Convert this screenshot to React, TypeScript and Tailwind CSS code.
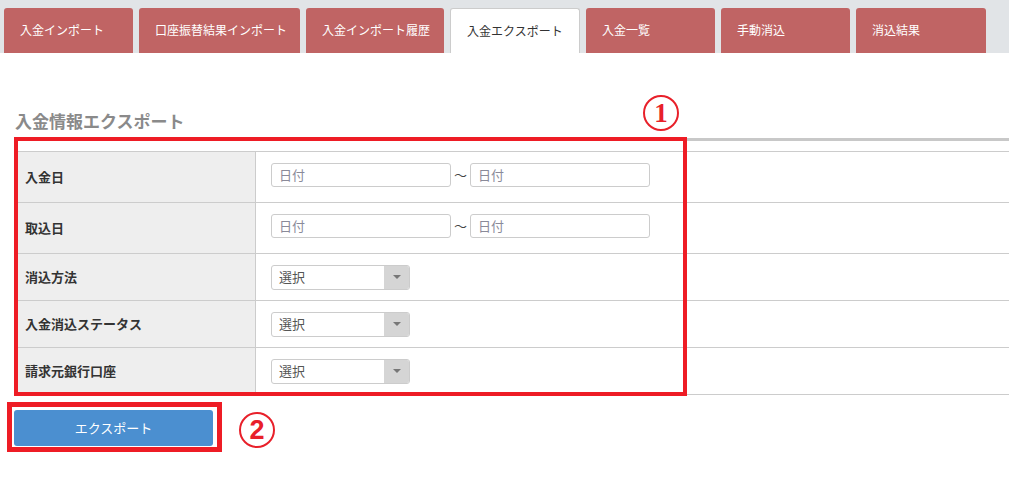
const font = { fontFamily: '"Noto Sans CJK JP", "Noto Sans", sans-serif' };

const tabs = [
  { label: "入金インポート", w: "w-[129px]" },
  { label: "口座振替結果インポート", w: "w-[161px]" },
  { label: "入金インポート履歴", w: "w-[138px]" },
  { label: "入金エクスポート", w: "w-[130px]", active: true },
  { label: "入金一覧", w: "w-[129px]" },
  { label: "手動消込", w: "w-[129px]" },
  { label: "消込結果", w: "w-[130px]" },
];

function DateInput() {
  return (
    <div className="w-[180px] h-[24px] border border-[#cccccc] rounded-[3px] bg-white flex items-center pl-[7px] text-[13px] text-[#8a8a99]">
      日付
    </div>
  );
}

function SelectBox() {
  return (
    <div className="w-[139px] h-[25px] border border-[#cccccc] rounded-[3px] bg-white flex overflow-hidden">
      <div className="flex-1 flex items-center pl-[7px] text-[13px] text-[#555555]">選択</div>
      <div className="w-[25px] bg-[#d5d5d5] flex items-center justify-center">
        <div className="w-0 h-0 border-l-[4px] border-r-[4px] border-t-[4px] border-l-transparent border-r-transparent border-t-[#777777]" />
      </div>
    </div>
  );
}

function Row({ label, h, children }: { label: string; h: string; children: React.ReactNode }) {
  return (
    <div className={`flex border-b border-[#cccccc] ${h}`}>
      <div className="w-[241px] shrink-0 bg-[#eeeeee] border-r border-[#cccccc] flex items-center pl-[10px] text-[13px] font-bold text-[#333333]">
        {label}
      </div>
      <div className="flex-1 flex items-center pl-[15px]">{children}</div>
    </div>
  );
}

function DateRange() {
  return (
    <div className="flex items-center pb-[4px]">
      <DateInput />
      <span className="w-[19px] text-center text-[13px] text-[#444444]">〜</span>
      <DateInput />
    </div>
  );
}

export default function App() {
  return (
    <div className="relative w-[1009px] h-[487px] bg-white overflow-hidden" style={font}>
      <div className="h-[53px] bg-[#e1e4e7] flex items-end pl-[4px] gap-[6px]">
        {tabs.map((t) => (
          <div
            key={t.label}
            className={`${t.w} h-[45px] rounded-t-[3px] pl-[16px] pt-[13px] text-[12px] leading-[18px] whitespace-nowrap ${
              t.active
                ? "bg-white text-[#333333] border border-b-0 border-[#cccccc]"
                : "bg-[#c06464] text-white"
            }`}
          >
            {t.label}
          </div>
        ))}
      </div>

      <div className="pl-[15px]">
        <div className="mt-[57px] pb-[7px] border-b-[3px] border-[#c8c8c8] text-[17px] leading-[21px] font-bold text-[#8a8a8a]">
          入金情報エクスポート
        </div>

        <div className="mt-[10px] border-t border-[#cccccc]">
          <Row label="入金日" h="h-[51px]">
            <DateRange />
          </Row>
          <Row label="取込日" h="h-[51px]">
            <DateRange />
          </Row>
          <Row label="消込方法" h="h-[47px]">
            <SelectBox />
          </Row>
          <Row label="入金消込ステータス" h="h-[47px]">
            <SelectBox />
          </Row>
          <Row label="請求元銀行口座" h="h-[47px]">
            <SelectBox />
          </Row>
        </div>

        <button className="mt-[15px] -ml-[1px] w-[199px] h-[36px] rounded-[3px] bg-[#4b8fd0] text-white text-[13px]">
          エクスポート
        </button>
      </div>

      {/* annotations */}
      <div className="absolute left-[14px] top-[137px] w-[673px] h-[259px] border-[4px] border-[#ee1c25]" />
      <div className="absolute left-[7px] top-[402px] w-[215px] h-[50px] border-[5px] border-[#ee1c25]" />
      <div className="absolute left-[643px] top-[95px] w-[36px] h-[36px] rounded-full border-2 border-[#e8202a] flex items-center justify-center text-[27px] font-bold text-[#e8202a] leading-none" style={{ fontFamily: '"Liberation Serif", serif' }}>
        1
      </div>
      <div className="absolute left-[239px] top-[412px] w-[36px] h-[36px] rounded-full border-2 border-[#e8202a] flex items-center justify-center text-[27px] font-bold text-[#e8202a] leading-none" style={{ fontFamily: '"Liberation Sans", sans-serif' }}>
        2
      </div>
    </div>
  );
}
